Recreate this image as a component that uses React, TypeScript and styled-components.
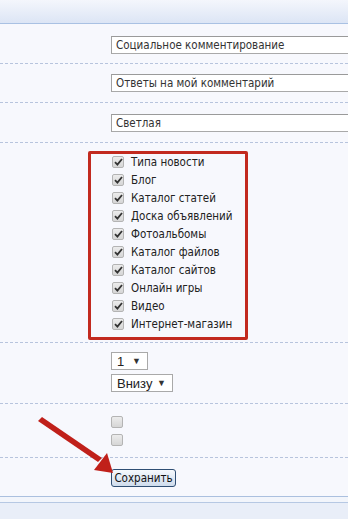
import React from "react";
import styled, { createGlobalStyle } from "styled-components";

const GlobalStyle = createGlobalStyle`
  html, body {
    margin: 0;
    padding: 0;
    background: #f7f8fd;
    font-family: "DejaVu Sans Condensed", "DejaVu Sans", Verdana, sans-serif;
    font-size: 11.5px;
    color: #222;
    overflow: hidden;
  }
`;

const Page = styled.div`
  position: relative;
  width: 348px;
  height: 519px;
  overflow: hidden;
  display: flex;
  flex-direction: column;
`;

const TopBar = styled.div`
  height: 23px;
  background: linear-gradient(to bottom, #f4f6fc 0%, #dce5f5 100%);
  border-bottom: 1px solid #a9c1e3;
`;

const Row = styled.div<{ $pt: number; $pb: number; $gap?: number; $last?: boolean }>`
  display: flex;
  flex-direction: column;
  gap: ${(p) => p.$gap ?? 0}px;
  padding: ${(p) => p.$pt}px 0 ${(p) => p.$pb}px 111px;
  border-bottom: ${(p) => (p.$last ? "none" : "1px dashed #b7c4dd")};
`;

const TextField = styled.div`
  box-sizing: border-box;
  width: 240px;
  height: 18px;
  padding: 0 4px;
  line-height: 16px;
  background: #fff;
  border: 1px solid #a9a9a9;
  border-top-color: #9a9a9a;
  border-left-color: #a3a3a3;
  color: #333;
  white-space: nowrap;
`;

const Highlight = styled.div`
  box-sizing: border-box;
  margin-left: -23px;
  width: 160px;
  padding: 0 0 5px 21px;
  border: 3px solid #c22a1f;
  border-radius: 2px;
  display: flex;
  flex-direction: column;
  gap: 2px;
`;

const CheckRow = styled.label<{ $h?: number }>`
  display: flex;
  align-items: center;
  gap: 7px;
  height: ${(p) => p.$h ?? 16}px;
  color: #222;
`;

const Box = styled.span`
  box-sizing: border-box;
  flex: none;
  width: 12px;
  height: 12px;
  border: 1px solid #b4b4b4;
  border-radius: 2px;
  background: linear-gradient(to bottom, #ececec, #d6d6d6);
  display: flex;
  align-items: center;
  justify-content: center;
`;

const Select = styled.div<{ $w: number }>`
  box-sizing: border-box;
  width: ${(p) => p.$w}px;
  height: 18px;
  padding: 0 6px 0 5px;
  background: #fff;
  border: 1px solid #a9a9a9;
  display: flex;
  align-items: center;
  justify-content: space-between;
  font-family: "Liberation Sans", Arial, sans-serif;
  font-size: 13px;
  color: #222;
`;

const Caret = styled.span`
  font-size: 9px;
  color: #333;
`;

const SaveButton = styled.button`
  box-sizing: border-box;
  width: 65px;
  height: 18px;
  padding: 0;
  border: 1px solid #2f4e73;
  border-radius: 3px;
  background: linear-gradient(to bottom, #f6f9fd 0%, #e2eaf5 50%, #cfdcec 100%);
  font-family: "DejaVu Sans Condensed", "DejaVu Sans", Verdana, sans-serif;
  font-size: 11.5px;
  color: #111;
`;

const BottomBar = styled.div`
  flex: 1;
  margin-top: 1px;
  border-top: 1px solid #abc0df;
  background: #e9eef8;
  &::before {
    content: "";
    display: block;
    height: 5px;
    background: #f2f5fb;
    border-bottom: 1px solid #b6c8e3;
  }
`;

const Pointer = styled.svg`
  position: absolute;
  left: 0;
  top: 0;
  pointer-events: none;
`;

const sections = [
  "Типа новости",
  "Блог",
  "Каталог статей",
  "Доска объявлений",
  "Фотоальбомы",
  "Каталог файлов",
  "Каталог сайтов",
  "Онлайн игры",
  "Видео",
  "Интернет-магазин",
];

function Check({ checked }: { checked?: boolean }) {
  return (
    <Box>
      {checked && (
        <svg width="9" height="8" viewBox="0 0 9 8">
          <path d="M1 4.2 L3.4 6.6 L8 1" fill="none" stroke="#333" strokeWidth="1.8" />
        </svg>
      )}
    </Box>
  );
}

export default function App() {
  return (
    <Page>
      <GlobalStyle />
      <TopBar />
      <Row $pt={12} $pb={9}>
        <TextField>Социальное комментирование</TextField>
      </Row>
      <Row $pt={10} $pb={10}>
        <TextField>Ответы на мой комментарий</TextField>
      </Row>
      <Row $pt={11} $pb={10}>
        <TextField>Светлая</TextField>
      </Row>
      <Row $pt={8} $pb={2}>
        <Highlight>
          {sections.map((s) => (
            <CheckRow key={s}>
              <Check checked />
              {s}
            </CheckRow>
          ))}
        </Highlight>
      </Row>
      <Row $pt={9} $pb={11} $gap={4}>
        <Select $w={37}>
          1<Caret>▼</Caret>
        </Select>
        <Select $w={62}>
          Внизу<Caret>▼</Caret>
        </Select>
      </Row>
      <Row $pt={12} $pb={11} $gap={6}>
        <CheckRow $h={12}>
          <Check />
        </CheckRow>
        <CheckRow $h={12}>
          <Check />
        </CheckRow>
      </Row>
      <Row $pt={11} $pb={8} $last>
        <SaveButton>Сохранить</SaveButton>
      </Row>
      <BottomBar />
      <Pointer width="348" height="519">
        <path d="M38 421 L42 417 L102 458 L98 462 Z" fill="#c0201a" />
        <path d="M94 470 L113 473 L107 453 Z" fill="#c0201a" />
      </Pointer>
    </Page>
  );
}
